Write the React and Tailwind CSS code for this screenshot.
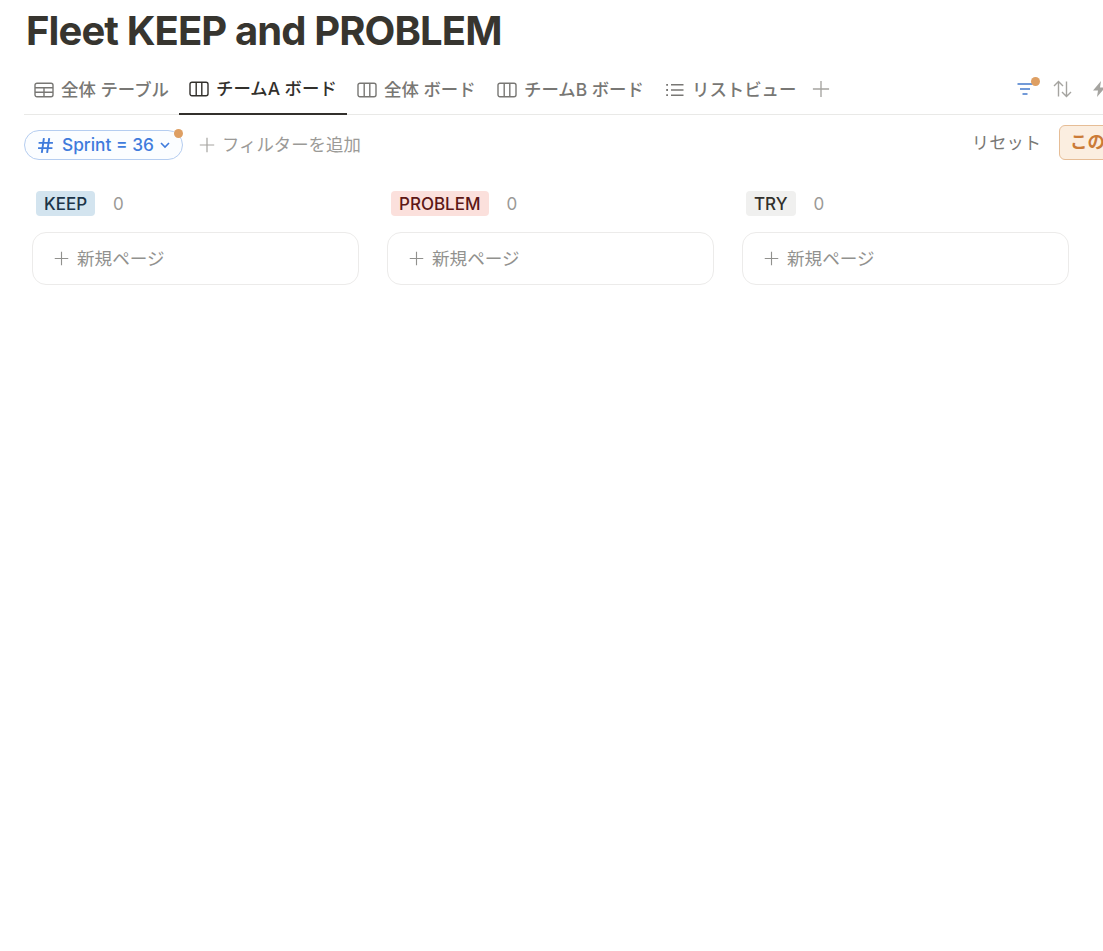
import React from 'react'

const columns = [
  { name: 'KEEP', tag: 'bg-[#d3e4ef] text-[#1c3448]' },
  { name: 'PROBLEM', tag: 'bg-[#fbe0dc] text-[#5d1715]' },
  { name: 'TRY', tag: 'bg-[#f0f0ef] text-[#32302c]' },
]

function TableIcon() {
  return (
    <svg width="20" height="16" viewBox="0 0 20 16" fill="none" stroke="currentColor" strokeWidth="1.4">
      <rect x="1" y="1.2" width="18" height="13.6" rx="2" />
      <path d="M1 5.7h18M1 10.2h18M10 5.7v9" />
    </svg>
  )
}

function BoardIcon() {
  return (
    <svg width="20" height="16" viewBox="0 0 20 16" fill="none" stroke="currentColor" strokeWidth="1.4">
      <rect x="1" y="1.2" width="18" height="13.6" rx="2" />
      <path d="M7.2 1.2v13.6M12.8 1.2v13.6" />
    </svg>
  )
}

function ListIcon() {
  return (
    <svg width="20" height="16" viewBox="0 0 20 16" fill="none" stroke="currentColor" strokeWidth="1.4">
      <path d="M6 2.8h12.5M6 8h12.5M6 13.2h12.5" />
      <path d="M1.2 2.8h1.8M1.2 8h1.8M1.2 13.2h1.8" strokeWidth="1.8" />
    </svg>
  )
}

function PlusIcon({ size = 16 }) {
  return (
    <svg width={size} height={size} viewBox="0 0 16 16" fill="none" stroke="currentColor" strokeWidth="1.2">
      <path d="M8 .8v14.4M.8 8h14.4" />
    </svg>
  )
}

const tabs = [
  { label: '全体 テーブル', icon: <TableIcon />, width: 'w-[155px]' },
  { label: 'チームA ボード', icon: <BoardIcon />, width: 'w-[168px]', active: true },
  { label: '全体 ボード', icon: <BoardIcon />, width: 'w-[140px]' },
  { label: 'チームB ボード', icon: <BoardIcon />, width: 'w-[168px]' },
  { label: 'リストビュー', icon: <ListIcon />, width: 'w-[152px]' },
]

export default function App() {
  return (
    <div className="w-[1103px] h-[951px] overflow-hidden bg-white font-['Inter','Noto_Sans_CJK_JP',sans-serif]">
      <h1 className="pl-[26px] pt-[8px] h-[70px] text-[40px] leading-[46px] font-bold text-[#37352f] tracking-[-0.9px] whitespace-nowrap">
        Fleet KEEP and PROBLEM
      </h1>

      <div className="ml-[24px] h-[45px] flex items-start border-b border-[#e9e9e7]">
        {tabs.map((t) => (
          <div
            key={t.label}
            className={`${t.width} h-[45px] shrink-0 flex items-center gap-[7px] pl-[10px] pb-[5px] text-[17.4px] font-medium whitespace-nowrap ${
              t.active ? 'text-[#32302c] border-b-2 border-[#32302c]' : 'text-[#787774]'
            }`}
          >
            {t.icon}
            <span>{t.label}</span>
          </div>
        ))}
        <div className="h-[38px] flex items-center text-[#a5a4a0] ml-[5px]">
          <PlusIcon size={18} />
        </div>
        <div className="ml-auto h-[38px] flex items-center shrink-0 gap-[20px] -mr-[3px]">
          <div className="relative text-[#447acb]">
            <svg width="16" height="16" viewBox="0 0 16 16" fill="none" stroke="currentColor" strokeWidth="1.7">
              <path d="M.5 3h15M3 8h10M5.5 13h5" />
            </svg>
            <span className="absolute -top-[4px] right-[-7px] w-[9px] h-[9px] rounded-full bg-[#de9f63]" />
          </div>
          <svg className="text-[#a5a4a0]" width="19" height="18" viewBox="0 0 19 18" fill="none" stroke="currentColor" strokeWidth="1.4">
            <path d="M5.5 16.5V1.5M1 6l4.5-4.5L10 6M13.5 1.5v15M9 12l4.5 4.5L18 12" />
          </svg>
          <svg className="text-[#a5a4a0] w-[14px] h-[18px] shrink-0" viewBox="0 0 14 18" fill="currentColor">
            <path d="M9 1 1 10.5h5L5 17l8-9.5H8z" />
          </svg>
        </div>
      </div>

      <div className="ml-[24px] mt-[10px] h-[35px] flex items-end">
        <div className="relative w-[159px] h-[30px] shrink-0 flex items-center pl-[12px] rounded-full border border-[#b5cdf0] bg-[#fbfdff] text-[#3f7bdc] text-[17.3px] font-medium whitespace-nowrap">
          <svg width="17" height="17" viewBox="0 0 16 16" fill="none" stroke="currentColor" strokeWidth="1.8">
            <path d="M1.5 5.5h13.5M1 10.5h13.5M6.5 1 4.5 15M11.5 1 9.5 15" />
          </svg>
          <span className="ml-[8px]">Sprint = 36</span>
          <svg className="ml-[5px]" width="12" height="12" viewBox="0 0 12 12" fill="none" stroke="currentColor" strokeWidth="1.6">
            <path d="m2 4 4 4 4-4" />
          </svg>
          <span className="absolute -top-[2px] right-[-1px] w-[9px] h-[9px] rounded-full bg-[#de9f63]" />
        </div>
        <div className="ml-[16px] h-[30px] flex items-center gap-[7px] text-[#a5a4a0]">
          <PlusIcon size={16} />
          <span className="text-[17.4px] text-[#9b9a97] whitespace-nowrap">フィルターを追加</span>
        </div>
        <span className="ml-auto h-[34px] flex items-center text-[17.3px] text-[#787774] whitespace-nowrap">リセット</span>
        <div className="ml-[18px] w-[90px] -mr-[46px] h-[35px] shrink-0 pl-[10px] flex items-center rounded-[6px] border border-[#e6bd96] bg-[#fbeee0] text-[#cb7b37] text-[17.4px] font-bold whitespace-nowrap">
          この
        </div>
      </div>

      <div className="mt-[31px] ml-[32px] flex gap-[28px]">
        {columns.map((c) => (
          <div key={c.name} className="w-[327px] shrink-0">
            <div className="h-[25px] flex items-center gap-[18px] pl-[4px]">
              <span className={`${c.tag} h-[25px] px-[8px] pt-[2px] flex items-center rounded-[4px] text-[17px] font-medium`}>{c.name}</span>
              <span className="pt-[2px] text-[17px] text-[#9b9a97]">0</span>
            </div>
            <div className="mt-[16px] h-[53px] flex items-center gap-[8px] pl-[21px] rounded-[14px] border border-[#ecebea] text-[#91918e]">
              <PlusIcon size={15} />
              <span className="pt-[2px] text-[17.6px]">新規ページ</span>
            </div>
          </div>
        ))}
      </div>
    </div>
  )
}
